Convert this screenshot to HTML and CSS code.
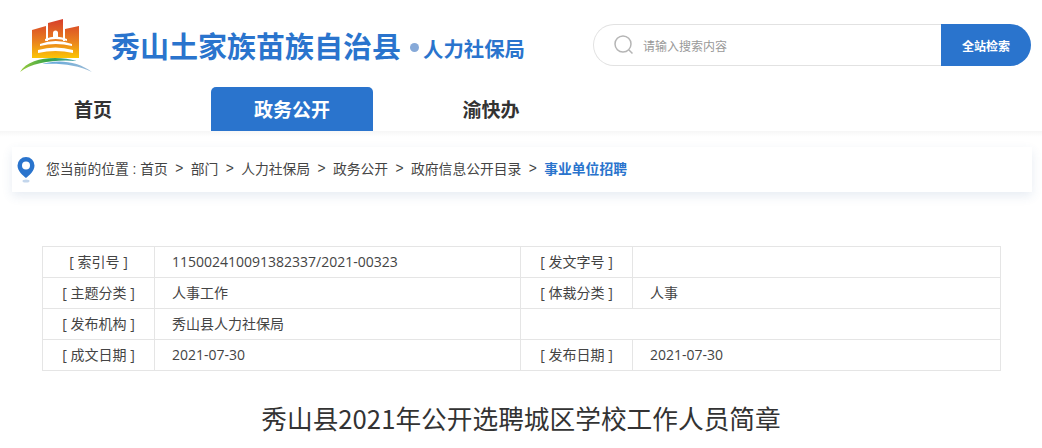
FILE: index.html
```html
<!DOCTYPE html>
<html lang="zh-CN">
<head>
<meta charset="utf-8">
<title>秀山县2021年公开选聘城区学校工作人员简章</title>
<link rel="stylesheet" href="styles.css">
</head>
<body>
<header class="top">
  <div class="brand">
    <svg class="logo" width="76" height="56" viewBox="0 0 76 56" aria-hidden="true">
      <defs>
        <linearGradient id="bld" gradientUnits="userSpaceOnUse" x1="0" y1="2" x2="0" y2="42">
          <stop offset="0" stop-color="#d63d2b"/>
          <stop offset="0.55" stop-color="#e9801f"/>
          <stop offset="1" stop-color="#fdc904"/>
        </linearGradient>
        <linearGradient id="grn" x1="0" y1="0" x2="1" y2="0">
          <stop offset="0" stop-color="#9ccb3b"/>
          <stop offset="0.5" stop-color="#35a34a"/>
          <stop offset="1" stop-color="#3f9fb0"/>
        </linearGradient>
        <linearGradient id="blu" x1="0" y1="0" x2="1" y2="0">
          <stop offset="0" stop-color="#5aa5dc"/>
          <stop offset="1" stop-color="#9dbcd6"/>
        </linearGradient>
      </defs>
      <path d="M14 13 L28 9 V24 H30 V6 L45 2 V24 H47 V12 L61 9 V41 H14Z" fill="url(#bld)"/>
      <path d="M35 16 a2.500 2.500 0 0 1 5 0 V20 H35Z" fill="#fff"/>
      <path d="M27 22 Q37.500 17 49 22 L49 24 Q37.500 20 27 24Z M22 27 Q37.500 21 54 27 L54 29 Q37.500 25 22 29Z M20 33 Q37.500 28 55 33 L55 36 Q37.500 32 20 36Z" fill="#fff"/>
      <path d="M2 55 C8 45 22 41 37 41 C45 41 52 42 59 44 C40 42 14 45 2 55Z" fill="url(#grn)"/>
      <path d="M24 47 C40 42 60 44 74 55 C60 48 42 46 24 47Z" fill="url(#blu)"/>
    </svg>
    <span class="site">秀山土家族苗族自治县</span>
    <i class="dot"></i>
    <span class="dept">人力社保局</span>
  </div>
  <form class="search">
    <div class="field">
      <svg width="22" height="22" viewBox="0 0 22 22" aria-hidden="true"><circle cx="10" cy="10" r="8" fill="none" stroke="#b5b5b5" stroke-width="1.500"/><path d="M16 16 L19.500 19.500" stroke="#b5b5b5" stroke-width="1.500"/></svg>
      <span class="hint">请输入搜索内容</span>
    </div>
    <div class="go">全站检索</div>
  </form>
</header>
<nav class="nav">
  <a class="tab tab-home">首页</a>
  <a class="tab tab-on">政务公开</a>
  <a class="tab tab-yu">渝快办</a>
</nav>
<div class="band">
  <div class="crumbs">
    <svg class="pin" width="18" height="27" viewBox="0 0 18 27" aria-hidden="true">
      <path d="M9 1 a8.500 8.500 0 0 1 8.500 8.500 C17.500 15 12 19.500 9 22 C6 19.500 .5 15 .5 9.500 A8.500 8.500 0 0 1 9 1Z" fill="#2a74cd"/>
      <circle cx="9" cy="9.500" r="4" fill="#fff"/>
      <ellipse cx="9" cy="25" rx="3.500" ry="1.500" fill="#c3d6ec"/>
    </svg>
    <span>您当前的位置 : 首页</span><b>&gt;</b><span>部门</span><b>&gt;</b><span>人力社保局</span><b>&gt;</b><span>政务公开</span><b>&gt;</b><span>政府信息公开目录</span><b>&gt;</b><span class="now">事业单位招聘</span>
  </div>
</div>
<main class="main">
  <table class="meta">
    <tr><th>[ 索引号 ]</th><td>115002410091382337/2021-00323</td><th>[ 发文字号 ]</th><td></td></tr>
    <tr><th>[ 主题分类 ]</th><td>人事工作</td><th>[ 体裁分类 ]</th><td>人事</td></tr>
    <tr><th>[ 发布机构 ]</th><td>秀山县人力社保局</td><td class="blank" colspan="2"></td></tr>
    <tr><th>[ 成文日期 ]</th><td>2021-07-30</td><th>[ 发布日期 ]</th><td>2021-07-30</td></tr>
  </table>
  <h1 class="title">秀山县2021年公开选聘城区学校工作人员简章</h1>
</main>
</body>
</html>
```
FILE: styles.css
```css
* { box-sizing: border-box; }
html, body { margin: 0; padding: 0; }
body {
  width: 1042px;
  height: 448px;
  overflow: hidden;
  background: #fff;
  font-family: "Noto Sans CJK SC", "Liberation Sans", sans-serif;
  color: #333;
}
.top {
  display: flex;
  justify-content: space-between;
  align-items: flex-start;
  height: 87px;
  padding: 16px 11px 0 18px;
}
.brand { display: flex; align-items: center; height: 58px; }
.logo { width: 76px; height: 56px; margin-right: 17px; }
.site { font-size: 29px; font-weight: 700; color: #2a74cd; line-height: 58px; }
.dot { width: 9px; height: 9px; margin: 4px 4px 0 9px; border-radius: 50%; background: #86a9d8; }
.dept { font-size: 20.400px; font-weight: 700; color: #2a74cd; line-height: 58px; margin-top: 5px; }
.search { display: flex; width: 438px; height: 42px; margin-top: 8px; }
.field {
  flex: 1;
  display: flex;
  align-items: center;
  gap: 8px;
  padding-left: 19px;
  border: 1px solid #e2e2e2;
  border-right: 0;
  border-radius: 21px 0 0 21px;
}
.hint { font-size: 12px; color: #999; }
.go {
  width: 90px;
  background: #2a74cd;
  color: #fff;
  font-size: 12px;
  font-weight: 700;
  line-height: 43px;
  text-align: center;
  border-radius: 0 21px 21px 0;
}
.nav { display: flex; height: 44px; }
.tab { display: block; font-size: 19px; font-weight: 700; line-height: 44px; text-align: center; color: #333; }
.tab-home { width: 162px; margin-left: 12px; }
.tab-on {
  width: 162px;
  margin-left: 37px;
  background: #2a74cd;
  color: #fff;
  border-radius: 5px 5px 0 0;
}
.tab-yu { width: 162px; margin-left: 37px; }
.band {
  height: 115px;
  padding: 16px 10px 0 12px;
  background: linear-gradient(#f6f6f6, #fff 6px);
}
.crumbs {
  display: flex;
  align-items: center;
  height: 45px;
  padding: 0 0 3px 5px;
  background: #fff;
  font-family: "Liberation Sans", "Noto Sans CJK SC", sans-serif;
  font-size: 13.800px;
  color: #444;
  box-shadow: 0 4px 10px rgba(60, 100, 160, .12);
}
.pin { margin-right: 11px; margin-top: 3px; }
.crumbs b { font-weight: 400; margin: 0 7.400px; }
.crumbs .now { color: #2a74cd; font-weight: 700; }
.main { padding: 0 42px; }
.meta {
  width: 959px;
  table-layout: fixed;
  border-collapse: collapse;
  font-family: "Open Sans", "Noto Sans CJK SC", sans-serif;
  font-size: 14px;
  color: #444;
}
.meta tr { height: 31px; }
.meta th, .meta td { border: 1px solid #e5e5e5; padding: 0 0 2px; font-weight: 400; }
.meta th { width: 112px; text-align: center; }
.meta th:nth-child(3) { width: 112px; }
.meta td { padding-left: 17px; }
.meta td:nth-child(2) { width: 366px; }
.title {
  margin: 29px 0 0;
  font-size: 25.700px;
  line-height: 36px;
  font-weight: 400;
  text-align: center;
  color: #333;
}
```
